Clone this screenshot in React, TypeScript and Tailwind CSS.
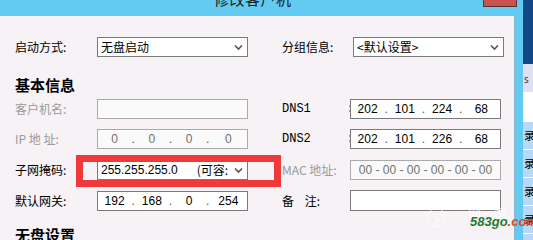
import { ReactNode } from "react";

const cjk = "font-['Noto_Sans_CJK_SC','Noto_Sans',sans-serif]";
const mono = "font-['Liberation_Mono','Noto_Sans_CJK_SC',monospace]";
const sans = "font-['Liberation_Sans','Noto_Sans_CJK_SC',sans-serif]";

const Chevron = () => (
  <svg width="9" height="7" viewBox="0 0 9 7" className="shrink-0">
    <path d="M1 1.5 L4.5 5 L8 1.5" fill="none" stroke="#555" strokeWidth="1.6" />
  </svg>
);

const Select = ({ children }: { children: ReactNode }) => (
  <div className="flex h-[20px] w-[151px] items-center justify-between border border-[#7a7a7a] bg-white pl-[3px] pr-[4px] text-[12px] leading-none text-black">
    <span className="whitespace-nowrap">{children}</span>
    <Chevron />
  </div>
);

const IpBox = ({ parts, disabled }: { parts: string[]; disabled?: boolean }) => (
  <div
    className={`flex h-[20px] w-[151px] items-center border ${sans} text-[12px] leading-none ${
      disabled ? "border-[#ababab] bg-[#fbfafb] text-[#707070]" : "border-[#7a7a7a] bg-white text-black"
    }`}
  >
    {parts.map((p, i) => (
      <div key={i} className="flex flex-1 items-center">
        <span className="flex-1 text-center">{p}</span>
        {i < 3 && <span className="w-[4px] text-center text-[#555]">.</span>}
      </div>
    ))}
  </div>
);

const Label = ({ children, gray, w = "w-[82px]" }: { children: ReactNode; gray?: boolean; w?: string }) => (
  <div className={`${w} shrink-0 whitespace-pre text-[12px] leading-none ${gray ? "text-[#9a9a9a]" : "text-black"}`}>
    {children}
  </div>
);

export default function App() {
  return (
    <div className={`relative flex h-[240px] w-[533px] overflow-hidden bg-[#0f4787] ${cjk}`}>
      {/* dialog window */}
      <div className="flex w-[523px] shrink-0 flex-col bg-[#63cbf1]">
        <div className="relative h-[16px] shrink-0 overflow-hidden">
          <div className="absolute left-[214px] top-[-9px] text-[15px] leading-none tracking-[0.5px] text-[#1a1a1a]">
            修改客户机
          </div>
          <div className="absolute left-[483px] top-[-2px] h-[9px] w-[34px] border border-[#5a3030] bg-[#c75450]" />
        </div>
        <div className="flex flex-1">
          <div className="relative w-[515px] shrink-0 border-r border-[#8ab4c8] bg-[#f6f2f6] pl-[15px] pt-[21px]">
            {/* row 1 */}
            <div className="flex items-center">
              <Label>启动方式:</Label>
              <Select>无盘启动</Select>
              <Label w="w-[71px] ml-[34px]">分组信息:</Label>
              <Select>&lt;默认设置&gt;</Select>
            </div>

            <div className="mt-[20px] text-[15px] font-bold leading-none text-black">基本信息</div>

            <div className="mt-[7px] flex items-center">
              <Label gray>客户机名:</Label>
              <div className="h-[20px] w-[151px] border border-[#ababab] bg-[#fbfafb]" />
              <Label w={`w-[68px] ml-[34px] ${mono}`}>{"DNS1     :"}</Label>
              <IpBox parts={["202", "101", "224", "68"]} />
            </div>

            <div className="mt-[10px] flex items-center">
              <Label gray>IP 地 址:</Label>
              <IpBox disabled parts={["0", "0", "0", "0"]} />
              <Label w={`w-[68px] ml-[34px] ${mono}`}>{"DNS2     :"}</Label>
              <IpBox parts={["202", "101", "226", "68"]} />
            </div>

            <div className="mt-[11px] flex items-center">
              <Label>子网掩码:</Label>
              <div className="flex h-[20px] w-[151px] items-center border border-[#7a7a7a] bg-white pl-[3px] pr-[4px] text-[12px] leading-none text-black">
                <span className={sans}>255.255.255.0</span>
                <span className="ml-[19px] flex-1 whitespace-nowrap">(可容:</span>
                <Chevron />
              </div>
              <Label gray w="w-[68px] ml-[34px]">MAC 地址:</Label>
              <div className={`flex h-[20px] w-[151px] items-center justify-center border border-[#ababab] bg-[#fbfafb] text-[12px] leading-none text-[#707070] whitespace-pre ${sans}`}>
                00 - 00 - 00 - 00 - 00 - 00
              </div>
            </div>

            <div className="mt-[10px] flex items-center">
              <Label>默认网关:</Label>
              <IpBox parts={["192", "168", "0", "254"]} />
              <Label w="w-[68px] ml-[34px]">{"备    注:"}</Label>
              <div className="h-[21px] w-[151px] border border-[#7a7a7a] bg-white" />
            </div>

            <div className="mt-[16px] text-[15px] font-bold leading-none text-black">无盘设置</div>

            {/* red annotation box */}
            <div className="absolute left-[76px] top-[139px] h-[32px] w-[205px] border-[7px] border-[#f03a3a]" />

            {/* watermark */}
            <div className="absolute left-[427px] top-[192px] flex h-[19px] w-[19px] items-center justify-center rounded-full border border-white/70 text-[11px] leading-none text-white/80">
              5
            </div>
            <div className="absolute left-[468px] top-[190px] text-[13px] leading-none text-white/80">网三国</div>
            <div className={`absolute left-[470px] top-[199px] ${sans} text-[13px] font-bold italic leading-none`}>
              <span className="text-[#1e7a2e]">583go</span>
              <span className="text-[#e0452a]">.com</span>
            </div>
          </div>
        </div>
      </div>

      {/* background window strip */}
      <div className="flex w-[10px] flex-col overflow-hidden text-[11px] leading-none">
        <div className="h-[64px] shrink-0 bg-[#0f4787]" />
        <div className="flex h-[28px] shrink-0 items-center bg-[#e0e0f0] pl-[1px] text-[#333]">ꜱ</div>
        <div className="h-[30px] shrink-0 bg-white" />
        {[0, 1, 2, 3, 4].map((i) => (
          <div key={i} className="flex h-[28px] shrink-0 items-center border-b border-white bg-[#b8d8f8] pl-[1px] text-black">
            录
          </div>
        ))}
      </div>
    </div>
  );
}
